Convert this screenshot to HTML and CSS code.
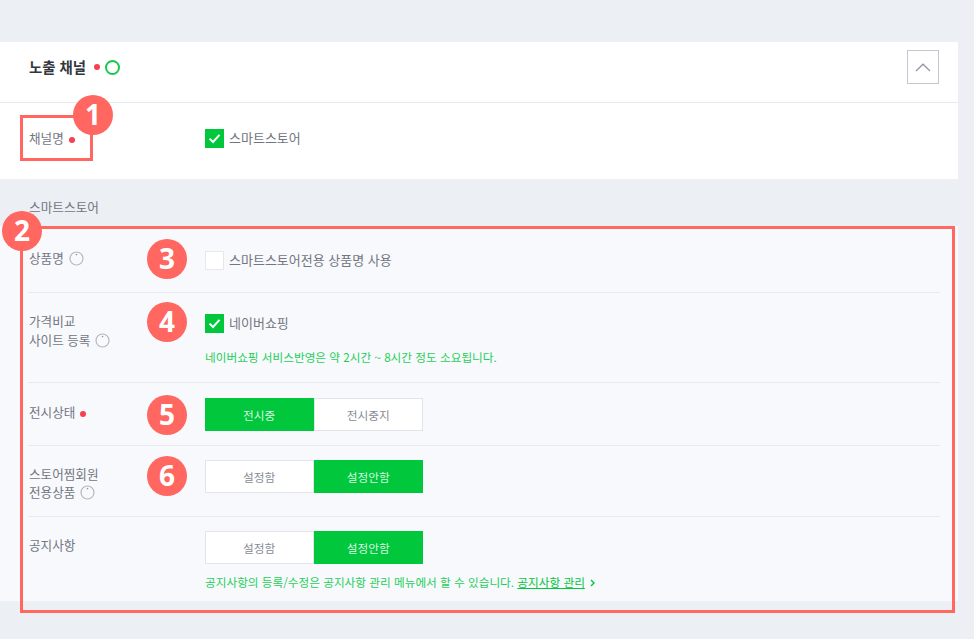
FILE: index.html
```
<!DOCTYPE html>
<html lang="ko">
<head>
<meta charset="utf-8">
<title>노출 채널</title>
<link rel="stylesheet" href="styles.css">
</head>
<body>
<div class="page">
  <section class="card">
    <header class="card-head">
      <h2 class="title">노출 채널</h2>
      <span class="dot dot-title"></span>
      <span class="ring"></span>
      <button class="toggle" type="button" aria-label="접기">
        <svg width="16" height="9" viewBox="0 0 16 9"><path d="M1 8 L8 1.2 L15 8" fill="none" stroke="#8f95a5" stroke-width="1.2"/></svg>
      </button>
    </header>
    <div class="channel-row">
      <div class="label">채널명<span class="dot"></span></div>
      <label class="check">
        <span class="box on"><svg width="13" height="11" viewBox="0 0 13 11"><path d="M1.5 5.6 L5 9 L11.5 1.8" fill="none" stroke="#fff" stroke-width="2"/></svg></span>
        <span class="check-text">스마트스토어</span>
      </label>
    </div>
  </section>

  <h3 class="sub-title">스마트스토어</h3>

  <section class="panel">
    <div class="row row-a">
      <div class="label">상품명<svg class="help" width="15" height="15" viewBox="0 0 15 15"><circle cx="7.5" cy="7.5" r="6.5" fill="none" stroke="#b4b8c3" stroke-width="1.2"/><circle cx="7.5" cy="3.6" r=".8" fill="#8f95a5"/></svg></div>
      <label class="check">
        <span class="box"></span>
        <span class="check-text">스마트스토어전용 상품명 사용</span>
      </label>
    </div>
    <div class="row row-b">
      <div class="label">가격비교<br>사이트 등록<svg class="help" width="15" height="15" viewBox="0 0 15 15"><circle cx="7.5" cy="7.5" r="6.5" fill="none" stroke="#b4b8c3" stroke-width="1.2"/><circle cx="7.5" cy="3.6" r=".8" fill="#8f95a5"/></svg></div>
      <div class="field">
        <label class="check">
          <span class="box on"><svg width="13" height="11" viewBox="0 0 13 11"><path d="M1.5 5.6 L5 9 L11.5 1.8" fill="none" stroke="#fff" stroke-width="2"/></svg></span>
          <span class="check-text">네이버쇼핑</span>
        </label>
        <p class="note note-b">네이버쇼핑 서비스반영은 약 2시간 ~ 8시간 정도 소요됩니다.</p>
      </div>
    </div>
    <div class="row row-c">
      <div class="label">전시상태<span class="dot"></span></div>
      <div class="seg">
        <button class="seg-btn active" type="button">전시중</button>
        <button class="seg-btn" type="button">전시중지</button>
      </div>
    </div>
    <div class="row row-d">
      <div class="label">스토어찜회원<br>전용상품<svg class="help" width="15" height="15" viewBox="0 0 15 15"><circle cx="7.5" cy="7.5" r="6.5" fill="none" stroke="#b4b8c3" stroke-width="1.2"/><circle cx="7.5" cy="3.6" r=".8" fill="#8f95a5"/></svg></div>
      <div class="seg">
        <button class="seg-btn" type="button">설정함</button>
        <button class="seg-btn active" type="button">설정안함</button>
      </div>
    </div>
    <div class="row row-e">
      <div class="label">공지사항</div>
      <div class="field">
        <div class="seg">
          <button class="seg-btn" type="button">설정함</button>
          <button class="seg-btn active" type="button">설정안함</button>
        </div>
        <p class="note note-e">공지사항의 등록/수정은 공지사항 관리 메뉴에서 할 수 있습니다. <a class="link" href="#">공지사항 관리</a><svg class="chev" width="5" height="8" viewBox="0 0 5 8"><path d="M1 1 L4 4 L1 7" fill="none" stroke="#00c73c" stroke-width="1.4"/></svg></p>
      </div>
    </div>
  </section>
</div>

<div class="mark mark-1"></div>
<div class="mark mark-2"></div>
<span class="num num-1">1</span>
<span class="num num-2">2</span>
<span class="num num-3">3</span>
<span class="num num-4">4</span>
<span class="num num-5">5</span>
<span class="num num-6">6</span>
</body>
</html>
```
FILE: styles.css
```
* { box-sizing: border-box; }
html, body { margin: 0; padding: 0; height: 100%; }
body {
  position: relative;
  width: 974px;
  height: 639px;
  overflow: hidden;
  background: #ecEff4;
  font-family: "Noto Sans CJK KR", "Noto Sans", sans-serif;
  font-size: 12.6px;
  color: #71767f;
}
.page { width: 958px; padding-top: 42px; }
.card { background: #fff; height: 137px; }
.card-head {
  display: flex;
  align-items: center;
  height: 61px;
  padding: 0 19px 10px 29px;
  border-bottom: 1px solid #e6e9f2;
}
.title { margin: 0; font-size: 14.4px; font-weight: 700; color: #33363d; line-height: 20px; }
.dot {
  display: inline-block;
  width: 6px;
  height: 6px;
  margin-left: 5px;
  border-radius: 50%;
  background: #f6404f;
  vertical-align: 0;
}
.dot-title { margin-left: 8px; }
.ring {
  width: 15px;
  height: 15px;
  margin-left: 5px;
  border: 2px solid #18c94e;
  border-radius: 50%;
}
.toggle {
  display: flex;
  align-items: center;
  justify-content: center;
  width: 32px;
  height: 34px;
  margin-left: auto;
  padding: 0;
  background: #fff;
  border: 1px solid #c4c7d0;
}
.channel-row {
  display: flex;
  align-items: flex-start;
  padding-top: 25px;
  padding-left: 29px;
}
.channel-row .check { margin-top: 1px; }
.label { width: 175.5px; flex: none; line-height: 19px; }
.help { margin-left: 5px; vertical-align: -3px; }
.check { display: flex; align-items: center; gap: 5.5px; line-height: 19px; font-size: 13px; }
.check-text { margin-top: -2px; }
.box {
  display: flex;
  align-items: center;
  justify-content: center;
  width: 19px;
  height: 19px;
  background: #fff;
  border: 1px solid #e6e8ed;
}
.box.on { background: #00c73c; border-color: #00c73c; }
.sub-title {
  margin: 0;
  height: 47px;
  padding: 19px 0 0 29px;
  font-size: 12.7px;
  font-weight: 400;
  line-height: 18px;
  color: #71767f;
}
.panel { height: 375px; padding: 0 18px 0 28px; background: #f8f9fd; }
.row {
  display: flex;
  align-items: flex-start;
  border-bottom: 1px solid #e8eaef;
  padding-left: 1px;
}
.row-a { height: 67px; padding-top: 22px; }
.row-a .check { margin-top: 3px; }
.row-b { height: 90px; padding-top: 18px; }
.row-b .check { margin-top: 3px; }
.row-c { height: 63px; padding-top: 15px; }
.row-c .label { padding-top: 4px; }
.row-d { height: 71px; padding-top: 14px; }
.row-d .label { padding-top: 5px; line-height: 18px; }
.row-e { height: 84px; border-bottom: 0; padding-top: 14px; }
.row-e .label { padding-top: 4px; }
.field { display: block; }
.note { margin: 0 0 0 .5px; font-size: 11.65px; line-height: 16px; color: #1fcf58; }
.note-b { margin-top: 16px; }
.note-e { margin-top: 10px; }
.link { color: #00c73c; text-decoration: underline; }
.chev { margin-left: 5px; }
.seg { display: flex; width: 218.5px; height: 33px; }
.seg-btn {
  flex: 1 1 0;
  padding: 0;
  font: inherit;
  font-size: 11.7px;
  color: #858a94;
  background: #fff;
  border: 1px solid #e2e4ea;
}
.seg-btn.active { background: #00c73c; border-color: #00c73c; color: #d9f7e2; }
.mark { position: absolute; border: 3px solid #ff6760; }
.mark-1 { left: 20px; top: 115px; width: 73px; height: 46px; }
.mark-2 { left: 20px; top: 226px; width: 935px; height: 387px; }
.num {
  position: absolute;
  width: 40px;
  height: 40px;
  border-radius: 50%;
  background: #ff6760;
  color: #fff;
  font-family: "Noto Sans", sans-serif;
  font-size: 28px;
  font-weight: 700;
  line-height: 38px;
  text-align: center;
}
.num-1 { left: 73px; top: 95px; }
.num-2 { left: 2px; top: 211px; }
.num-3 { left: 147px; top: 239px; }
.num-4 { left: 147px; top: 302px; }
.num-5 { left: 147px; top: 395px; }
.num-6 { left: 147px; top: 456px; }
```
